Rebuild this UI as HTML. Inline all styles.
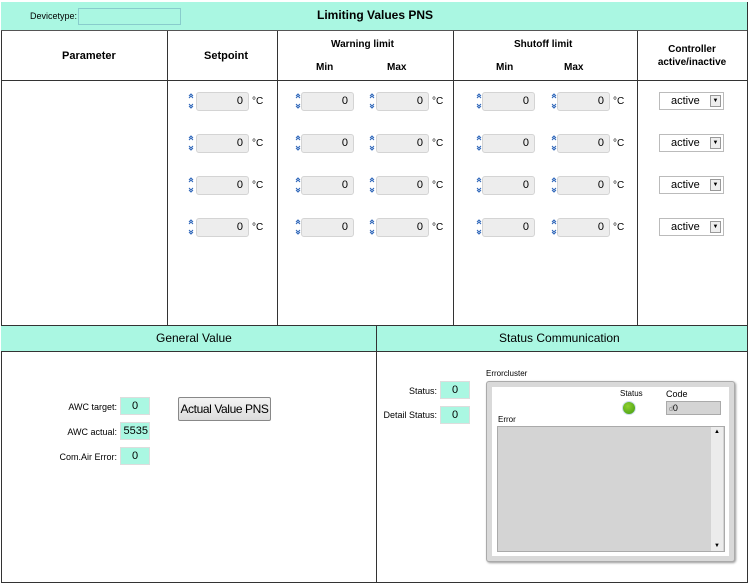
<!DOCTYPE html>
<html><head><style>
*{margin:0;padding:0;box-sizing:border-box}
body{width:750px;height:585px;background:#fff;position:relative;overflow:hidden;font-family:"Liberation Sans",sans-serif;font-size:11px;color:#000}
.a{position:absolute;white-space:nowrap}
.teal{background:#aaf7e2}
.hl{position:absolute;height:1px;background:#333}
.vl{position:absolute;width:1px;background:#333}
.b{font-weight:bold}
.num{position:absolute;width:53px;height:19px;background:#ededed;border:1px solid #d4d4d4;border-radius:3px;text-align:right;padding-right:5px;line-height:17px;font-size:11px}
.arr{position:absolute;width:6px;height:18px}
.c{position:absolute;font-size:10px;line-height:19px}
.dd{position:absolute;left:659px;width:65px;height:18px;border:1px solid #bbb;background:#fff;font-size:11px;line-height:16px;padding-left:11px}
.dd i{position:absolute;right:2px;top:2px;width:11px;height:12px;border:1px solid #999;background:#eee;font-style:normal;font-size:6px;line-height:10px;text-align:center}
.tf{position:absolute;width:30px;height:18px;background:#aaf7e2;border:1px solid #ddd;text-align:center;font-size:11px;line-height:16px;overflow:hidden}
.lb{position:absolute;font-size:9px;text-align:right;white-space:nowrap}
</style></head><body>
<svg width="0" height="0" style="position:absolute"><defs><symbol id="ar" viewBox="0 0 6 18"><path d="M1 4L3 2L5 4M1 6L3 4L5 6M1 12L3 14L5 12M1 14L3 16L5 14" fill="none" stroke="#2a63b8" stroke-width="1"/></symbol></defs></svg>
<div class="a teal" style="left:1px;top:2px;width:746px;height:29px;border-bottom:1px solid #555"></div>
<div class="a" style="left:30px;top:11px;font-size:9px">Devicetype:</div>
<div class="a" style="left:78px;top:8px;width:103px;height:17px;background:#aaf7e2;border:1px solid #8cc"></div>
<div class="a b" style="left:317px;top:8px;font-size:12px">Limiting Values PNS</div>
<div class="vl" style="left:1px;top:31px;height:552px"></div>
<div class="vl" style="left:747px;top:2px;height:581px"></div>
<div class="hl" style="left:1px;top:80px;width:746px"></div>
<div class="vl" style="left:167px;top:31px;height:294px"></div>
<div class="vl" style="left:277px;top:31px;height:294px"></div>
<div class="vl" style="left:453px;top:31px;height:294px"></div>
<div class="vl" style="left:637px;top:31px;height:294px"></div>
<div class="a b" style="left:62px;top:50px">Parameter</div>
<div class="a b" style="left:204px;top:50px">Setpoint</div>
<div class="a b" style="left:331px;top:39px;font-size:10px">Warning limit</div>
<div class="a b" style="left:316px;top:62px;font-size:10px">Min</div>
<div class="a b" style="left:387px;top:62px;font-size:10px">Max</div>
<div class="a b" style="left:514px;top:39px;font-size:10px">Shutoff limit</div>
<div class="a b" style="left:496px;top:62px;font-size:10px">Min</div>
<div class="a b" style="left:564px;top:62px;font-size:10px">Max</div>
<div class="a b" style="left:640px;top:43px;width:104px;text-align:center;font-size:10px;line-height:13px">Controller<br>active/inactive</div>

<svg class="arr" style="left:188px;top:92px"><use href="#ar"/></svg><div class="num" style="left:196px;top:92px">0</div><div class="c" style="left:252px;top:92px">°C</div>
<svg class="arr" style="left:295px;top:92px"><use href="#ar"/></svg><div class="num" style="left:301px;top:92px">0</div>
<svg class="arr" style="left:369px;top:92px"><use href="#ar"/></svg><div class="num" style="left:376px;top:92px">0</div><div class="c" style="left:432px;top:92px">°C</div>
<svg class="arr" style="left:476px;top:92px"><use href="#ar"/></svg><div class="num" style="left:482px;top:92px">0</div>
<svg class="arr" style="left:551px;top:92px"><use href="#ar"/></svg><div class="num" style="left:557px;top:92px">0</div><div class="c" style="left:613px;top:92px">°C</div>
<div class="dd" style="top:92px">active<i>▼</i></div>

<svg class="arr" style="left:188px;top:134px"><use href="#ar"/></svg><div class="num" style="left:196px;top:134px">0</div><div class="c" style="left:252px;top:134px">°C</div>
<svg class="arr" style="left:295px;top:134px"><use href="#ar"/></svg><div class="num" style="left:301px;top:134px">0</div>
<svg class="arr" style="left:369px;top:134px"><use href="#ar"/></svg><div class="num" style="left:376px;top:134px">0</div><div class="c" style="left:432px;top:134px">°C</div>
<svg class="arr" style="left:476px;top:134px"><use href="#ar"/></svg><div class="num" style="left:482px;top:134px">0</div>
<svg class="arr" style="left:551px;top:134px"><use href="#ar"/></svg><div class="num" style="left:557px;top:134px">0</div><div class="c" style="left:613px;top:134px">°C</div>
<div class="dd" style="top:134px">active<i>▼</i></div>

<svg class="arr" style="left:188px;top:176px"><use href="#ar"/></svg><div class="num" style="left:196px;top:176px">0</div><div class="c" style="left:252px;top:176px">°C</div>
<svg class="arr" style="left:295px;top:176px"><use href="#ar"/></svg><div class="num" style="left:301px;top:176px">0</div>
<svg class="arr" style="left:369px;top:176px"><use href="#ar"/></svg><div class="num" style="left:376px;top:176px">0</div><div class="c" style="left:432px;top:176px">°C</div>
<svg class="arr" style="left:476px;top:176px"><use href="#ar"/></svg><div class="num" style="left:482px;top:176px">0</div>
<svg class="arr" style="left:551px;top:176px"><use href="#ar"/></svg><div class="num" style="left:557px;top:176px">0</div><div class="c" style="left:613px;top:176px">°C</div>
<div class="dd" style="top:176px">active<i>▼</i></div>

<svg class="arr" style="left:188px;top:218px"><use href="#ar"/></svg><div class="num" style="left:196px;top:218px">0</div><div class="c" style="left:252px;top:218px">°C</div>
<svg class="arr" style="left:295px;top:218px"><use href="#ar"/></svg><div class="num" style="left:301px;top:218px">0</div>
<svg class="arr" style="left:369px;top:218px"><use href="#ar"/></svg><div class="num" style="left:376px;top:218px">0</div><div class="c" style="left:432px;top:218px">°C</div>
<svg class="arr" style="left:476px;top:218px"><use href="#ar"/></svg><div class="num" style="left:482px;top:218px">0</div>
<svg class="arr" style="left:551px;top:218px"><use href="#ar"/></svg><div class="num" style="left:557px;top:218px">0</div><div class="c" style="left:613px;top:218px">°C</div>
<div class="dd" style="top:218px">active<i>▼</i></div>

<div class="a teal" style="left:1px;top:325px;width:746px;height:27px;border-top:1px solid #333;border-bottom:1px solid #333"></div>
<div class="vl" style="left:376px;top:325px;height:258px"></div>
<div class="hl" style="left:1px;top:582px;width:747px"></div>
<div class="a" style="left:156px;top:331px;font-size:12px">General Value</div>
<div class="a" style="left:499px;top:331px;font-size:12px">Status Communication</div>

<div class="lb" style="left:20px;width:97px;top:402px">AWC target:</div>
<div class="tf" style="left:120px;top:397px">0</div>
<div class="lb" style="left:20px;width:97px;top:427px">AWC actual:</div>
<div class="tf" style="left:120px;top:422px;text-align:right;padding-right:1px">5535</div>
<div class="lb" style="left:20px;width:97px;top:452px">Com.Air Error:</div>
<div class="tf" style="left:120px;top:447px">0</div>
<div class="a" style="left:178px;top:397px;width:93px;height:24px;border:1px solid #888;border-radius:2px;background:linear-gradient(#f4f4f4,#dcdcdc);font-size:12px;line-height:22px;text-align:center;letter-spacing:-0.4px">Actual Value PNS</div>

<div class="lb" style="left:380px;width:57px;top:386px">Status:</div>
<div class="tf" style="left:440px;top:381px">0</div>
<div class="lb" style="left:370px;width:67px;top:410px">Detail Status:</div>
<div class="tf" style="left:440px;top:406px">0</div>

<div class="a" style="left:486px;top:369px;font-size:8px">Errorcluster</div>
<div class="a" style="left:486px;top:381px;width:249px;height:181px;background:#d9d9d9;border:1px solid #aaa;border-radius:3px;box-shadow:1px 1px 2px #999"></div>
<div class="a" style="left:492px;top:387px;width:237px;height:169px;background:#fff"></div>
<div class="a" style="left:620px;top:389px;font-size:8px">Status</div>
<div class="a" style="left:622px;top:401px;width:14px;height:14px;border-radius:50%;background:radial-gradient(circle at 40% 35%,#8fd030,#3f9a10);border:1px solid #cde"></div>
<div class="a" style="left:666px;top:389px;font-size:9px">Code</div>
<div class="a" style="left:666px;top:401px;width:55px;height:14px;background:#d4d4d4;border:1px solid #aaa;font-size:9px;line-height:12px;padding-left:2px"><span style="color:#888;font-size:7px">d</span>0</div>
<div class="a" style="left:498px;top:415px;font-size:8px">Error</div>
<div class="a" style="left:497px;top:426px;width:228px;height:126px;background:#d4d4d4;border:1px solid #aaa"></div>
<div class="a" style="left:711px;top:427px;width:12px;height:124px;background:#ececec;font-size:6px;text-align:center;line-height:10px">▲<div style="position:absolute;bottom:0;width:12px">▼</div></div>
</body></html>
